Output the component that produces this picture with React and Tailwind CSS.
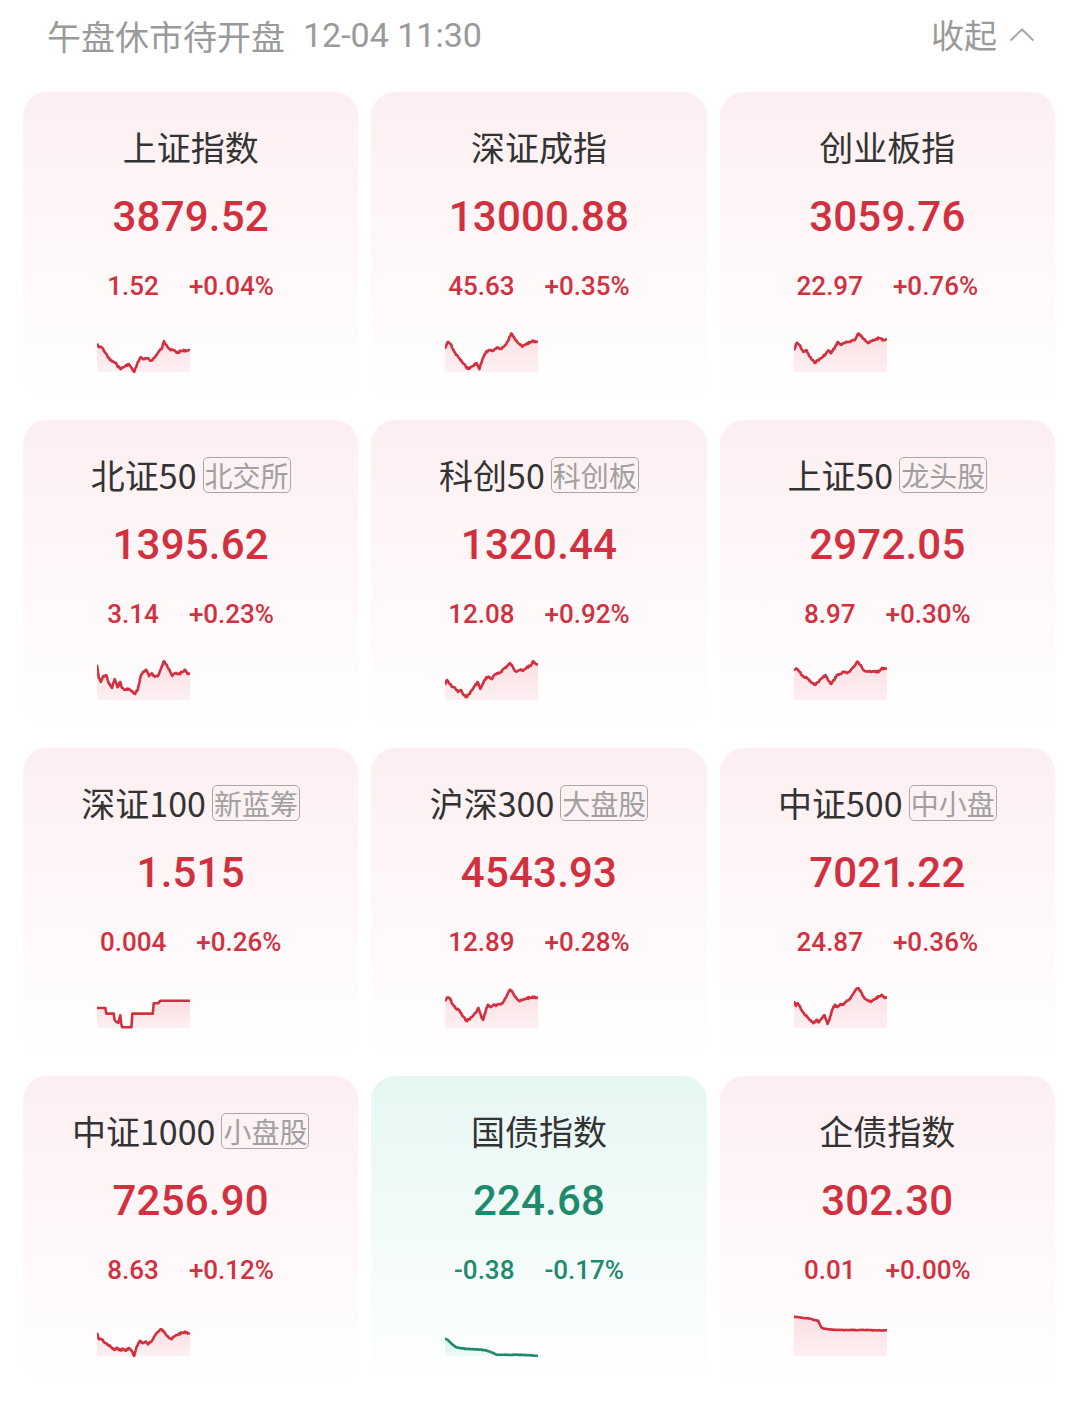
import React from 'react';

const RED = '#d2303e';
const GREEN = '#1e8a6c';

// 关键点 (x%, y%)，y 从上到下
const cards = [
  { name: '上证指数', value: '3879.52', chg: '1.52', pct: '+0.04%', line: [[0,29],[2,38],[5,38],[9,52],[14,70],[20,78],[25,92],[30,86],[34,80],[37,90],[40,100],[44,75],[47,63],[50,68],[54,66],[58,72],[62,64],[66,50],[70,40],[72,23],[75,33],[79,45],[83,46],[86,52],[90,48],[95,46],[100,46]] },
  { name: '深证成指', value: '13000.88', chg: '45.63', pct: '+0.35%', line: [[0,42],[3,25],[6,30],[10,50],[15,65],[20,80],[25,92],[30,85],[34,78],[37,93],[40,70],[44,50],[48,45],[52,47],[56,40],[60,42],[64,35],[68,22],[71,4],[74,12],[77,22],[80,30],[83,37],[87,30],[91,27],[95,22],[100,25]] },
  { name: '创业板指', value: '3059.76', chg: '22.97', pct: '+0.76%', line: [[0,46],[3,27],[6,33],[10,50],[13,45],[17,62],[22,77],[26,70],[30,64],[34,55],[37,46],[40,53],[44,38],[47,25],[50,32],[54,28],[58,25],[62,22],[66,18],[69,4],[72,10],[76,18],[80,28],[84,22],[88,18],[92,15],[96,20],[100,18]] },
  { name: '北证50', tag: '北交所', value: '1395.62', chg: '3.14', pct: '+0.23%', line: [[0,12],[2,45],[4,55],[7,40],[10,38],[13,60],[16,70],[19,48],[22,68],[25,55],[27,70],[30,75],[34,72],[38,80],[41,85],[44,72],[47,40],[50,29],[53,25],[56,40],[59,33],[62,42],[66,38],[69,21],[72,3],[75,12],[78,25],[81,40],[84,33],[88,35],[92,30],[95,25],[98,35],[100,33]] },
  { name: '科创50', tag: '科创板', value: '1320.44', chg: '12.08', pct: '+0.92%', line: [[0,62],[2,50],[5,60],[8,67],[11,70],[14,80],[17,75],[20,88],[23,92],[26,85],[29,75],[32,65],[35,55],[38,72],[41,58],[44,45],[47,42],[50,48],[53,38],[56,35],[60,30],[63,22],[67,15],[70,8],[73,18],[76,28],[80,25],[84,27],[88,18],[92,15],[95,3],[98,10],[100,12]] },
  { name: '上证50', tag: '龙头股', value: '2972.05', chg: '8.97', pct: '+0.30%', line: [[0,25],[3,22],[6,30],[10,42],[14,45],[18,55],[22,62],[26,55],[30,45],[34,38],[37,52],[40,60],[43,50],[46,38],[50,35],[53,30],[57,33],[61,25],[65,15],[68,4],[71,12],[75,25],[79,28],[83,30],[87,28],[91,30],[94,22],[97,20],[100,22]] },
  { name: '深证100', tag: '新蓝筹', value: '1.515', chg: '0.004', pct: '+0.26%', jitter: 0, line: [[0,50],[9,50],[10,64],[18,64],[19,80],[21,85],[23,87],[25,68],[26,88],[27,98],[37,98],[38,64],[60,64],[61,38],[66,38],[68,32],[100,32]] },
  { name: '沪深300', tag: '大盘股', value: '4543.93', chg: '12.89', pct: '+0.28%', line: [[0,33],[2,25],[5,25],[8,40],[12,52],[15,55],[19,70],[23,82],[26,78],[29,72],[33,62],[36,50],[39,72],[41,80],[44,55],[46,42],[49,48],[52,42],[55,45],[58,40],[62,38],[65,25],[68,12],[70,4],[73,12],[76,22],[80,33],[84,30],[88,25],[92,25],[96,22],[100,25]] },
  { name: '中证500', tag: '中小盘', value: '7021.22', chg: '24.87', pct: '+0.36%', line: [[0,33],[2,45],[4,38],[7,50],[10,62],[14,72],[17,80],[21,88],[24,80],[27,85],[30,75],[33,68],[36,90],[38,80],[41,55],[44,42],[47,48],[50,40],[53,42],[56,35],[60,27],[63,17],[66,5],[69,0],[72,10],[75,22],[80,32],[83,35],[87,27],[91,22],[95,18],[98,25],[100,22]] },
  { name: '中证1000', tag: '小盘股', value: '7256.90', chg: '8.63', pct: '+0.12%', line: [[0,42],[2,58],[5,58],[8,66],[12,72],[16,80],[19,85],[22,80],[25,86],[28,82],[31,87],[34,80],[37,86],[40,100],[43,75],[46,62],[49,68],[52,64],[55,71],[58,65],[62,50],[65,40],[69,33],[72,40],[76,50],[80,58],[84,50],[88,45],[92,42],[96,40],[100,45]] },
  { name: '国债指数', value: '224.68', chg: '-0.38', pct: '-0.17%', down: true, jitter: 0.6, line: [[0,56],[3,60],[6,67],[9,73],[12,78],[16,80],[22,82],[30,83],[38,84],[44,86],[48,89],[52,93],[56,97],[62,97],[70,97],[80,97],[90,98],[100,100]] },
  { name: '企债指数', value: '302.30', chg: '0.01', pct: '+0.00%', jitter: 0.6, line: [[0,2],[5,3],[10,5],[16,6],[22,10],[26,12],[28,22],[30,30],[33,32],[40,34],[50,35],[60,35],[70,35],[80,35],[90,36],[100,36]] },
];

// 在关键点之间插值并加一点固定的抖动，让曲线看起来像分时线
function densify(pts, jitter = 2.2) {
  const out = [];
  let seed = 7;
  const rnd = () => {
    seed = (seed * 9301 + 49297) % 233280;
    return seed / 233280 - 0.5;
  };
  for (let i = 0; i < pts.length - 1; i++) {
    const [x1, y1] = pts[i];
    const [x2, y2] = pts[i + 1];
    const steps = Math.max(1, Math.round((x2 - x1) / 0.8));
    for (let s = 0; s < steps; s++) {
      const t = s / steps;
      const y = y1 + (y2 - y1) * t + (s === 0 ? 0 : rnd() * jitter * 2);
      out.push([x1 + (x2 - x1) * t, Math.min(100, Math.max(0, y))]);
    }
  }
  out.push(pts[pts.length - 1]);
  return out;
}

const Spark = ({ line, down, jitter }) => {
  const pts = densify(line, jitter);
  const d = pts.map(([x, y]) => `${x.toFixed(2)},${(y * 0.4).toFixed(2)}`).join(' ');
  const area = `0,40 ${d} 100,40`;
  const color = down ? GREEN : RED;
  return (
    <svg width="93" height="42" viewBox="0 -1 100 42" preserveAspectRatio="none" className="block">
      <defs>
        <linearGradient id={down ? 'fg' : 'fr'} x1="0" y1="0" x2="0" y2="1">
          <stop offset="0" stopColor={down ? '#d4f2ea' : '#fbdfe3'} />
          <stop offset="1" stopColor={down ? '#eefaf7' : '#fdf0f2'} />
        </linearGradient>
      </defs>
      <polygon points={area} fill={`url(#${down ? 'fg' : 'fr'})`} />
      <polyline points={d} fill="none" stroke={color} strokeWidth="2.6" strokeLinejoin="round" vectorEffect="non-scaling-stroke" />
    </svg>
  );
};

const Card = ({ c }) => {
  const color = c.down ? 'text-[#1e8a6c]' : 'text-[#d2303e]';
  return (
    <div className={`flex h-[315px] flex-col items-center rounded-[24px] pt-[35px] ${c.down ? 'bg-gradient-to-b from-[#e6f7f4] to-white' : 'bg-gradient-to-b from-[#fdeff1] to-white'}`}>
      <div className="flex h-[40px] items-center text-[34px] leading-[40px] text-[#333]">
        <span>{c.name}</span>
        {c.tag && (
          <span className="ml-[6px] rounded-[5px] border border-[#a8a8a8] px-[1px] text-[28px] leading-[34px] text-[#a0a0a0]">
            {c.tag}
          </span>
        )}
      </div>
      <div className={`mt-[24px] h-[52px] text-[42px] font-medium leading-[52px] tracking-[0.2px] ${color}`} style={{ fontFamily: 'Roboto, sans-serif' }}>
        {c.value}
      </div>
      <div className={`mt-[27px] flex h-[32px] items-center gap-[30px] text-[26px] font-medium leading-[32px] ${color}`} style={{ fontFamily: 'Roboto, sans-serif' }}>
        <span>{c.chg}</span>
        <span>{c.pct}</span>
      </div>
      <div className="mt-[29px] w-full pl-[74px]">
        <Spark line={c.line} down={c.down} jitter={c.jitter} />
      </div>
    </div>
  );
};

export default function App() {
  return (
    <div className="min-h-[1403px] w-[1079px] bg-white" style={{ fontFamily: '"Noto Sans CJK SC", Roboto, sans-serif' }}>
      <div className="flex h-[70px] items-center justify-between pl-[47px] pr-[44px]">
        <div className="flex items-center text-[34px] text-[#9a9a9a]">
          <span>午盘休市待开盘</span>
          <span className="ml-[18px]" style={{ fontFamily: 'Roboto, sans-serif' }}>12-04 11:30</span>
        </div>
        <div className="flex items-center gap-[12px] text-[33px] text-[#9a9a9a]">
          <span>收起</span>
          <svg width="26" height="14" viewBox="0 0 26 14" fill="none">
            <path d="M1.5 12.5 L13 1.5 L24.5 12.5" stroke="#a8a8a8" strokeWidth="2" />
          </svg>
        </div>
      </div>
      <div className="mt-[22px] grid grid-cols-3 gap-x-[13px] gap-y-[13px] pl-[23px] pr-[24px]">
        {cards.map((c) => (
          <Card key={c.name} c={c} />
        ))}
      </div>
    </div>
  );
}
